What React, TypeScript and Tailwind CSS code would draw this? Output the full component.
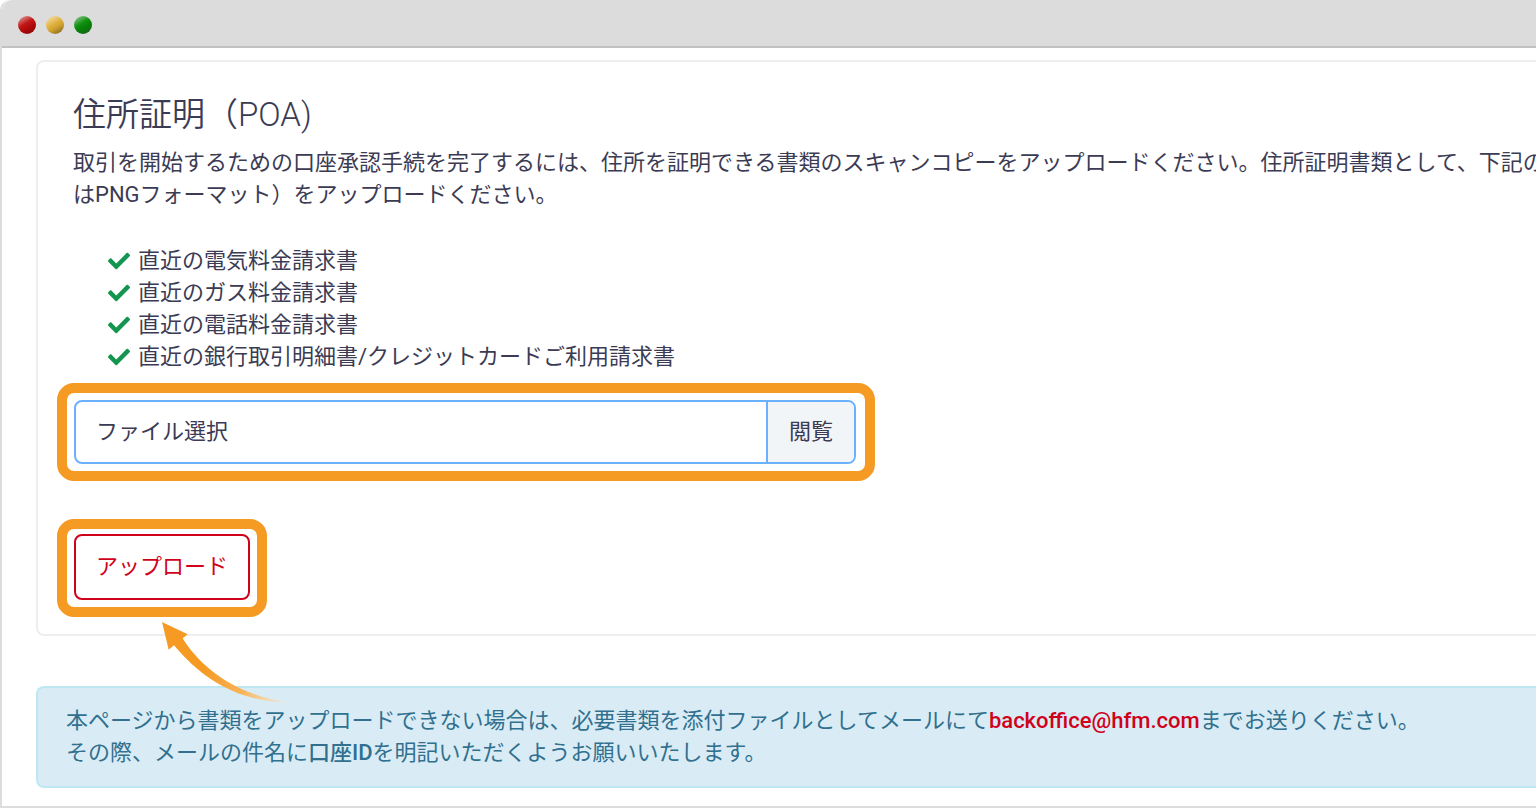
import { FaCheck } from "react-icons/fa";

const documents = [
  "直近の電気料金請求書",
  "直近のガス料金請求書",
  "直近の電話料金請求書",
  "直近の銀行取引明細書/クレジットカードご利用請求書",
];

function TitleBar() {
  return (
    <header className="flex h-12 items-center gap-2.5 rounded-tl-[10px] border-b-2 border-[#c1c1c1] bg-[#dcdcdc] pt-1 pl-4">
      <span className="size-[18px] rounded-full bg-[linear-gradient(150deg,#e0a0a0_5%,#c01818_42%,#b00808_65%,#800808_95%)]" />
      <span className="size-[18px] rounded-full bg-[linear-gradient(150deg,#f3dfae_5%,#dfb03c_45%,#cfa030_62%,#806420_95%)]" />
      <span className="size-[18px] rounded-full bg-[linear-gradient(150deg,#90c890_5%,#109010_42%,#068006_62%,#206020_95%)]" />
    </header>
  );
}

function Arrow() {
  return (
    <svg
      className="pointer-events-none absolute top-[86px] left-[86px] z-10 h-[86px] w-[134px]"
      viewBox="160 620 134 86"
      aria-hidden="true"
    >
      <defs>
        <linearGradient id="arrow-fade" gradientUnits="userSpaceOnUse" x1="165" y1="625" x2="284" y2="706">
          <stop offset="0.4" stopColor="#f59a23" />
          <stop offset="0.72" stopColor="#f8b55c" />
          <stop offset="1" stopColor="#fde3bd" stopOpacity="0.5" />
        </linearGradient>
      </defs>
      <path
        d="M162 622 L187.7 634.3 L182.7 638.3 C199 665 233 695 290 702.7 C240 702 204 681 174 645.3 L168.7 649.7 Z"
        fill="url(#arrow-fade)"
      />
    </svg>
  );
}

export default function App() {
  return (
    <div className="flex min-h-screen flex-col overflow-hidden rounded-tl-[10px] border-b-2 border-l-2 border-[#dcdcdc] bg-white font-['Roboto','Noto_Sans_CJK_JP',sans-serif] text-[22px] leading-8 text-[#3b3b54]">
      <TitleBar />
      <main className="flex flex-col gap-[50px] pt-3 pb-[18px] pl-[34px]">
        <section className="rounded-l-lg border-2 border-r-0 border-[#eeeeee] pt-[35px] pb-[34px] pl-[35px]">
          <h1 className="mb-3.5 text-[33px] leading-9 font-[350]">住所証明（POA)</h1>
          <p className="overflow-hidden whitespace-nowrap">
            取引を開始するための口座承認手続を完了するには、住所を証明できる書類のスキャンコピーをアップロードください。住所証明書類として、下記のう
            <br />
            はPNGフォーマット）をアップロードください。
          </p>
          <ul className="mt-[34px] pl-[35px]">
            {documents.map((name) => (
              <li key={name} className="flex items-center gap-2">
                <FaCheck className="size-[22px] shrink-0 text-[#159552]" aria-hidden="true" />
                {name}
              </li>
            ))}
          </ul>
          <form className="mt-[27px] ml-px flex flex-col items-start gap-[70px]" onSubmit={(e) => e.preventDefault()}>
            <div className="relative w-full max-w-[782px]">
              <span className="pointer-events-none absolute -inset-y-[17px] -right-[19px] -left-[17px] rounded-[17px] border-10 border-[#f59a23]" />
              <label
                htmlFor="poa-file"
                className="relative flex h-16 cursor-pointer items-stretch overflow-hidden rounded-lg border-2 border-[#6bb1ff] bg-white"
              >
                <span className="flex flex-1 items-center px-5">ファイル選択</span>
                <span className="flex items-center border-l-2 border-[#6bb1ff] bg-[#f1f5f8] px-[21px]">閲覧</span>
                <input id="poa-file" type="file" className="absolute inset-0 cursor-pointer opacity-0" />
              </label>
            </div>
            <div className="relative">
              <span className="pointer-events-none absolute -inset-x-[17px] -top-[15px] -bottom-[17px] rounded-[17px] border-10 border-[#f59a23]" />
              <button
                type="submit"
                className="relative block h-[66px] cursor-pointer rounded-lg border-2 border-[#d0021b] bg-white px-5 text-[#d0021b]"
              >
                アップロード
              </button>
              <Arrow />
            </div>
          </form>
        </section>
        <aside className="rounded-l-lg border-2 border-r-0 border-[#bde8f1] bg-[#d9ecf5] py-[17px] pl-7 text-[#31708f]">
          <p>
            本ページから書類をアップロードできない場合は、必要書類を添付ファイルとしてメールにて
            <a href="mailto:backoffice@hfm.com" className="font-medium text-[#d0021b]">
              backoffice@hfm.com
            </a>
            までお送りください。
            <br />
            その際、メールの件名に<strong className="font-medium">口座ID</strong>を明記いただくようお願いいたします。
          </p>
        </aside>
      </main>
    </div>
  );
}
